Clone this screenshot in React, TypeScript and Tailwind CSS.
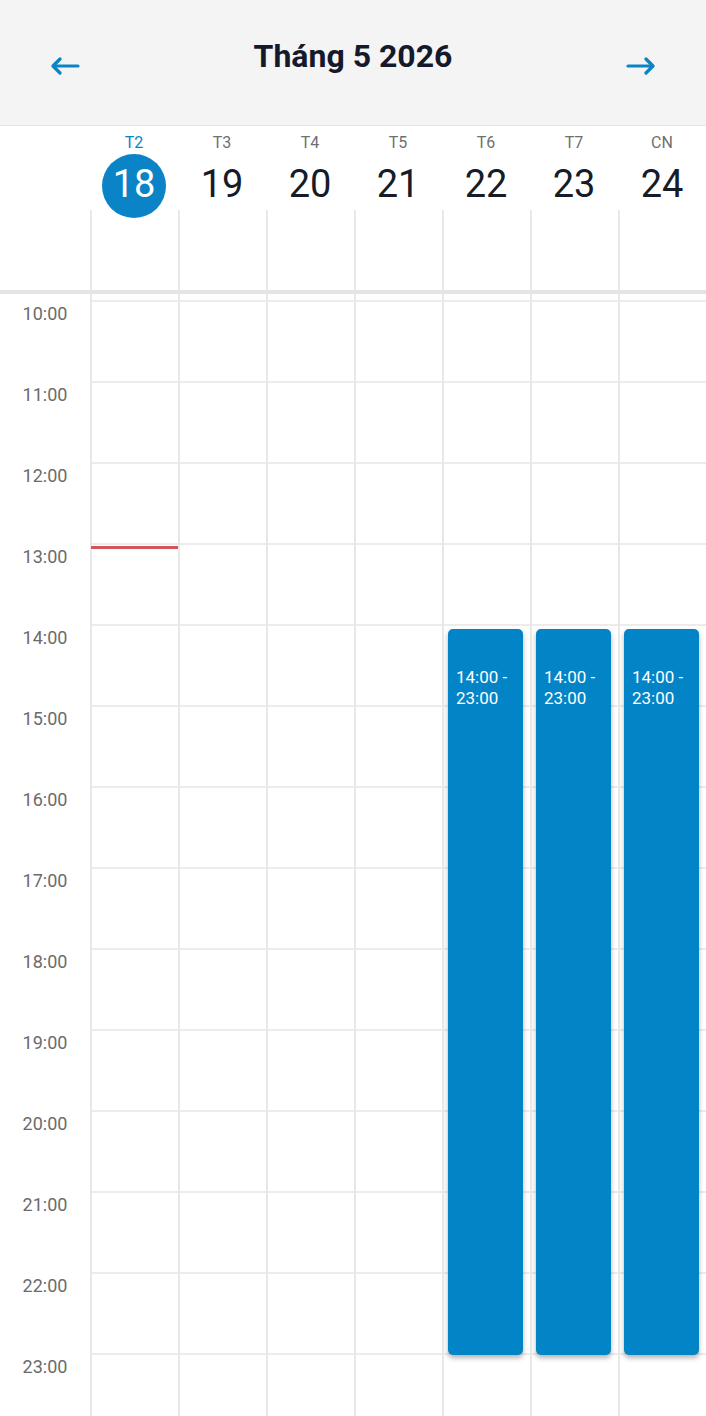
import React from 'react';

const DAYS = [
  { label: 'T2', date: 18, today: true },
  { label: 'T3', date: 19 },
  { label: 'T4', date: 20 },
  { label: 'T5', date: 21 },
  { label: 'T6', date: 22 },
  { label: 'T7', date: 23 },
  { label: 'CN', date: 24 },
];

const HOURS = Array.from({ length: 14 }, (_, i) => i + 10);

const Arrow = ({ dir }: { dir: 'left' | 'right' }) => (
  <svg width="30" height="18" viewBox="0 0 30 18" className={dir === 'right' ? 'rotate-180' : ''}>
    <path d="M28 9H4" stroke="#0b84c6" strokeWidth="3.2" strokeLinecap="round" fill="none" />
    <path d="M10 2L3 9l7 7" stroke="#0b84c6" strokeWidth="3.2" strokeLinecap="round" strokeLinejoin="round" fill="none" />
  </svg>
);

export default function App() {
  return (
    <div className="h-[1416px] w-[706px] overflow-hidden bg-white" style={{ fontFamily: 'Roboto, "Noto Sans", sans-serif' }}>
      <header className="flex h-[126px] items-start justify-between border-b border-[#e4e4e4] bg-[#f4f4f5] px-[50px]">
        <button className="mt-[57px]">
          <Arrow dir="left" />
        </button>
        <h1 className="mt-[36px] flex-1 text-center text-[32px] font-bold leading-[40px] text-[#141a2b]">Tháng 5 2026</h1>
        <button className="mt-[57px]">
          <Arrow dir="right" />
        </button>
      </header>

      <div className="flex">
        <div className="w-[90px] shrink-0" />
        {DAYS.map((day) => (
          <div key={day.label} className="flex flex-1 flex-col items-center pt-[7px]">
            <span className={`text-[16px] leading-5 ${day.today ? 'text-[#0b84c6]' : 'text-[#6f6f6f]'}`}>{day.label}</span>
            <span
              className={`relative z-10 -mb-2 mt-px flex h-16 w-16 items-center justify-center rounded-full pb-[5px] text-[38px] leading-none ${
                day.today ? 'bg-[#0a84c6] text-white' : 'text-[#161b28]'
              }`}
            >
              {day.date}
            </span>
            <div className="h-[80px] w-full border-l-2 border-[#e8e8e8]" />
          </div>
        ))}
      </div>
      <div className="h-1 bg-[#e4e4e4]" />

      <div className="flex">
        <div className="w-[90px] shrink-0 pt-[6px]">
          {HOURS.map((h) => (
            <div key={h} className="h-[81px] pt-[4px] text-center text-[18px] leading-5 text-[#6b6b6b]">
              {h}:00
            </div>
          ))}
        </div>
        {DAYS.map((day, idx) => (
          <div key={day.label} className="relative flex-1 border-l-2 border-[#e8e8e8] pt-[6px]">
            {HOURS.map((h) => (
              <div key={h} className="h-[81px] border-t-2 border-[#ececec]" />
            ))}
            {idx === 0 && <div className="absolute left-[-1px] right-0 top-[252px] h-[3px] bg-[#d4525a]" />}
            {idx >= 4 && (
              <div className="absolute left-[4px] right-[7px] top-[335px] h-[726px] rounded-[5px] bg-[#0384c6] px-2 pt-[38px] text-[17px] leading-[21px] text-white shadow-[0_3px_5px_rgba(0,0,0,0.3)]">
                14:00 -
                <br />
                23:00
              </div>
            )}
          </div>
        ))}
      </div>
    </div>
  );
}
